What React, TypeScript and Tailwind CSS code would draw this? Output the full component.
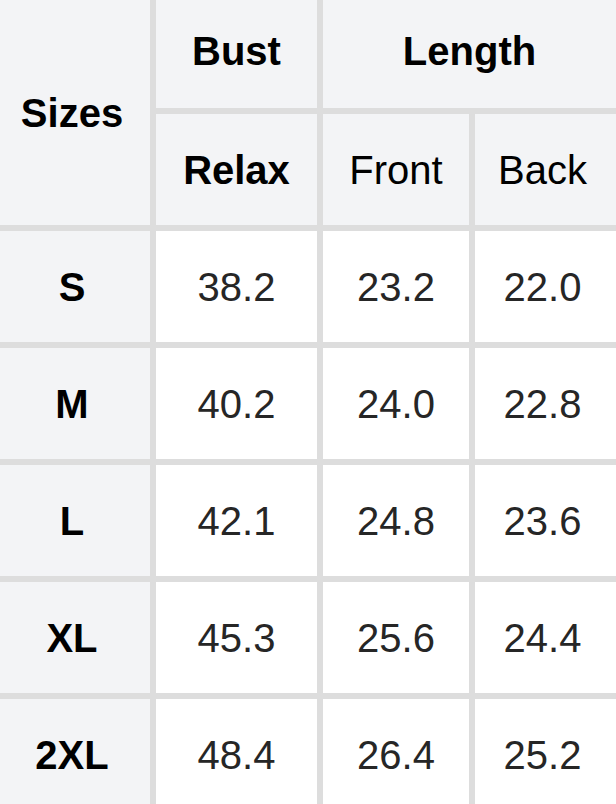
import React from "react";

type Row = {
  size: string;
  relax: string;
  front: string;
  back: string;
};

const rows: Row[] = [
  { size: "S", relax: "38.2", front: "23.2", back: "22.0" },
  { size: "M", relax: "40.2", front: "24.0", back: "22.8" },
  { size: "L", relax: "42.1", front: "24.8", back: "23.6" },
  { size: "XL", relax: "45.3", front: "25.6", back: "24.4" },
  { size: "2XL", relax: "48.4", front: "26.4", back: "25.2" },
];

const head = "flex items-center justify-center bg-[#f3f4f6] text-black";
const cell = "flex items-center justify-center bg-white text-[#262626]";

const App: React.FC = () => {
  return (
    <div className="w-[616px] h-[804px] overflow-hidden bg-white">
      <div
        className="grid grid-cols-[150px_161px_146px_141px] grid-rows-[108px_111px_repeat(5,111px)] gap-[6px] bg-[#dddddd] text-[40px] leading-none"
        style={{ fontFamily: '"Liberation Sans", Arial, sans-serif' }}
      >
        <div className={`${head} row-span-2 font-bold pr-[6px]`}>Sizes</div>
        <div className={`${head} font-bold pb-[6px]`}>Bust</div>
        <div className={`${head} col-span-2 font-bold pb-[6px]`}>Length</div>

        <div className={`${head} font-bold`}>Relax</div>
        <div className={`${head} text-[#262626]`}>Front</div>
        <div className={`${head} text-[#262626] pr-[6px]`}>Back</div>

        {rows.map((r) => (
          <React.Fragment key={r.size}>
            <div className={`${head} font-bold pr-[6px]`}>{r.size}</div>
            <div className={cell}>{r.relax}</div>
            <div className={cell}>{r.front}</div>
            <div className={`${cell} pr-[6px]`}>{r.back}</div>
          </React.Fragment>
        ))}
      </div>
    </div>
  );
};

export default App;
